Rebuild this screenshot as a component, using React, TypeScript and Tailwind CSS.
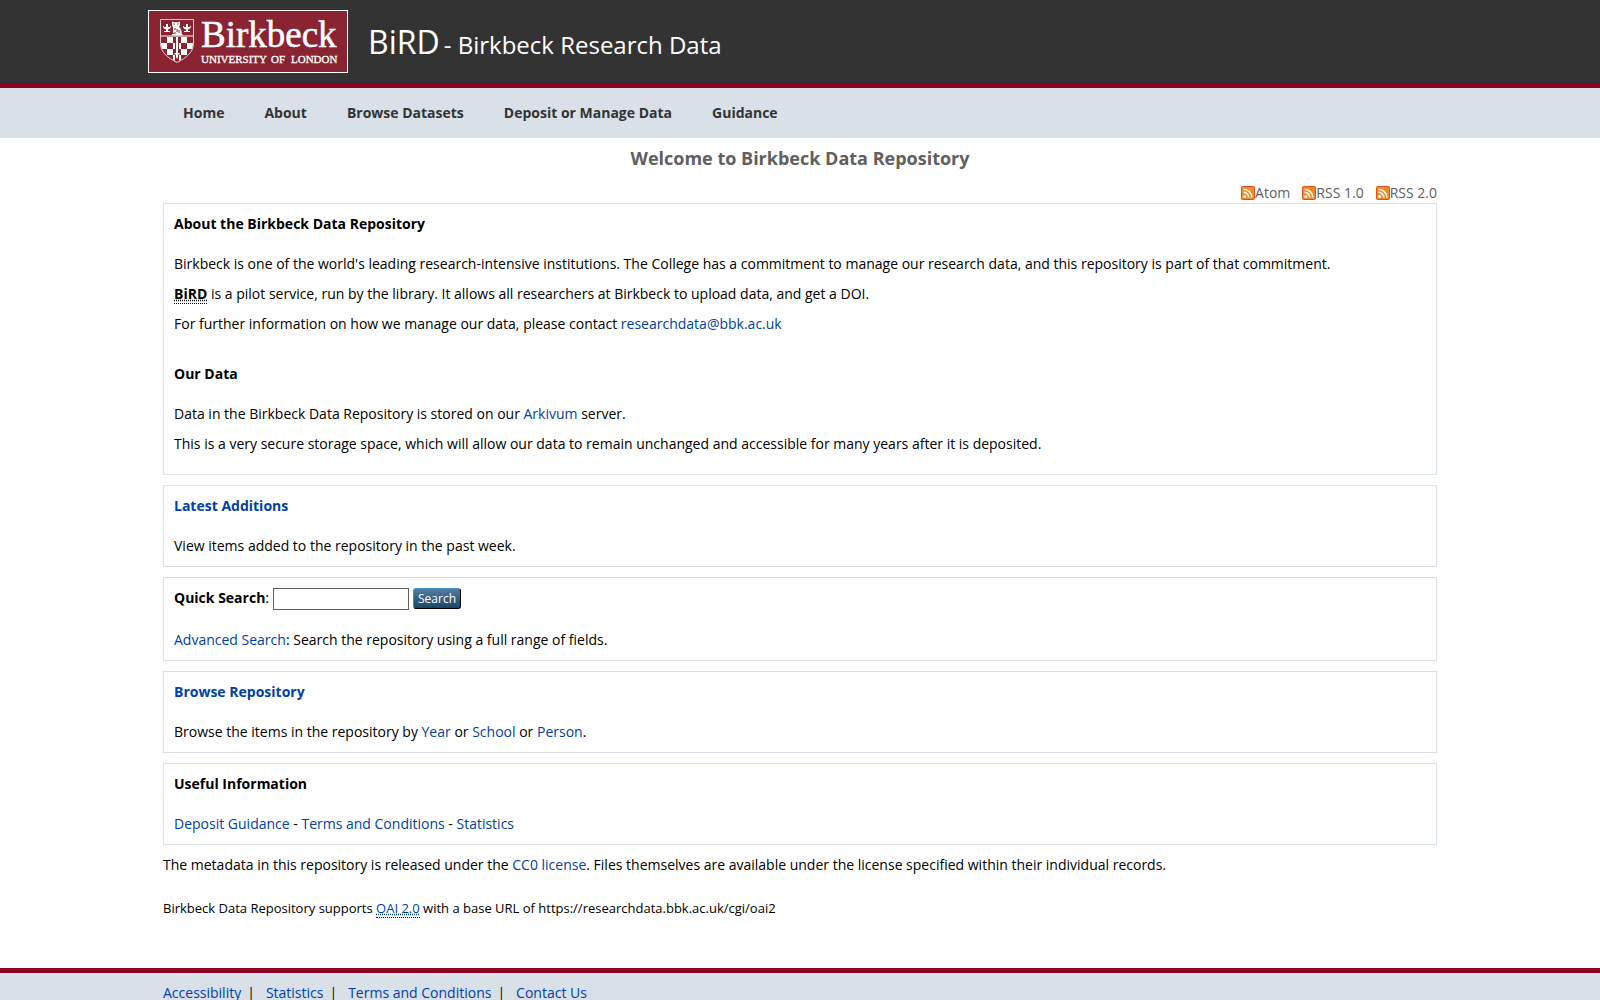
import type { ReactNode } from "react";

const wrap = "mx-auto w-full max-w-[1304px] px-[15px]";

function Link({ children }: { children: ReactNode }) {
  return (
    <a href="#" className="text-[#0040a8] hover:underline">
      {children}
    </a>
  );
}

function Crest() {
  return (
    <svg x="11" y="8" width="34" height="44" viewBox="0 0 34 44">
      <path d="M.5 .5h33v24c0 9-7.500 14.500-16.500 19C8 39 .5 33.500.5 24.500z" fill="#8a2432" stroke="#e6cdd1" />
      <clipPath id="shield">
        <path d="M1 17h32v7.500c0 8.500-7 14-16 18.300C8 38.500 1 33 1 24.500z" />
      </clipPath>
      <g clipPath="url(#shield)" fill="#fff">
        <path d="M7 18h6v6H7zM1 24h6v6H1zM13 24h2v6h-2zM7 30h6v6H7zM13 36h2v6h-2z" />
        <path d="M21 18h6v6h-6zM27 24h6v6h-6zM19 24h2v6h-2zM21 30h6v6h-6zM19 36h2v6h-2z" />
        <path d="M16 18h2v20l-1 2-1-2zM14.500 34h5v1.500h-5z" />
      </g>
      <path d="M1 17h32" stroke="#fff" />
      <g fill="#fff">
        <path d="M12 2.500l2 .700h4l2-.700V6l-1 2c2 1.500 3 4 2.500 7h1V16.500H12V15h2l-1-2V8l-1-2z" />
        <path d="M6 5h2v3h2V7h1c0 2-1 3-3 3.500V12h2v1H4v-1h2v-1.500C4 10 3 9 3 7h1v1h2z" />
        <path d="M26 5h2v3h2V7h1c0 2-1 3-3 3.500V12h2v1h-6v-1h2v-1.500c-2-.500-3-1.500-3-3.500h1v1h2z" />
      </g>
      <path d="M13.500 5h1.500M17 5h1.500M15 9v2M17 10v3M19 11v3M15 13v2" stroke="#8a2432" />
    </svg>
  );
}

function Logo() {
  return (
    <a
      href="#"
      aria-label="Birkbeck, University of London"
      className="block h-[63px] w-[200px] shrink-0 border border-white bg-[#8a2432]"
    >
      <svg viewBox="0 0 198 61" className="h-full w-full" aria-hidden="true">
        <Crest />
        <g fill="#fff" stroke="#fff" fontFamily="Liberation Serif, serif">
          <text x="52" y="36" strokeWidth="0.5" fontSize="37">
            Birkbeck
          </text>
          <g strokeWidth="0.3" fontSize="11">
            <text x="52" y="52">UNIVERSITY</text>
            <text x="122" y="52">OF</text>
            <text x="142" y="52">LONDON</text>
          </g>
        </g>
      </svg>
    </a>
  );
}

function FeedIcon() {
  return (
    <svg viewBox="0 0 14 14" className="size-3.5" aria-hidden="true">
      <rect width="14" height="14" rx="2" fill="#d9541a" />
      <rect x="1" y="1" width="12" height="12" rx="1" fill="#f58a2a" />
      <circle cx="3.700" cy="10.400" r="1.500" fill="#fff" />
      <path d="M2.500 6.300a5.300 5.300 0 0 1 5.300 5.300M2.500 3.200a8.400 8.400 0 0 1 8.400 8.400" fill="none" stroke="#fff" strokeWidth="1.500" />
    </svg>
  );
}

function Panel({ children }: { children: ReactNode }) {
  return <section className="mb-2.5 border border-[#d9e0e7] p-2.5">{children}</section>;
}

const nav = ["Home", "About", "Browse Datasets", "Deposit or Manage Data", "Guidance"];
const feeds = ["Atom", "RSS 1.0", "RSS 2.0"];
const footer = ["Accessibility", "Statistics", "Terms and Conditions", "Contact Us"];

export default function App() {
  return (
    <div className="min-h-screen bg-white font-['Open_Sans','Noto_Sans',sans-serif] text-sm/5 text-black">
      <header className="border-b-5 border-[#8c0026] bg-[#333333]">
        <div className="mx-auto flex w-full max-w-[1304px] items-start gap-5 py-2.5">
          <Logo />
          <h1 className="flex items-baseline gap-1 pt-2.5 text-2xl/11 font-normal text-white">
            <span className="text-[32px]">BiRD</span>
            <span>- Birkbeck Research Data</span>
          </h1>
        </div>
      </header>
      <nav className="bg-[#d9e0e7]">
        <ul className={`${wrap} flex`}>
          {nav.map((item) => (
            <li key={item}>
              <a href="#" className="block px-5 py-[15px] font-bold text-[#333333]">
                {item}
              </a>
            </li>
          ))}
        </ul>
      </nav>
      <main className={wrap}>
        <h2 className="py-2.5 text-center text-lg/5 font-bold text-[#606060]">Welcome to Birkbeck Data Repository</h2>
        <ul className="mt-[5px] flex justify-end gap-3 text-[#606060]">
          {feeds.map((feed) => (
            <li key={feed}>
              <a href="#" className="flex items-center">
                <FeedIcon />
                {feed}
              </a>
            </li>
          ))}
        </ul>
        <Panel>
          <h3 className="mb-5 font-bold">About the Birkbeck Data Repository</h3>
          <p className="mb-2.5">
            Birkbeck is one of the world's leading research-intensive institutions. The College has a commitment to manage our
            research data, and this repository is part of that commitment.
          </p>
          <p className="mb-2.5">
            <abbr title="Birkbeck Research Data" className="border-b border-dotted border-black font-bold underline decoration-dotted">
              BiRD
            </abbr>{" "}
            is a pilot service, run by the library. It allows all researchers at Birkbeck to upload data, and get a DOI.
          </p>
          <p>
            For further information on how we manage our data, please contact <Link>researchdata@bbk.ac.uk</Link>
          </p>
          <h3 className="mt-[30px] mb-5 font-bold">Our Data</h3>
          <p className="mb-2.5">
            Data in the Birkbeck Data Repository is stored on our <Link>Arkivum</Link> server.
          </p>
          <p className="mb-2.5">
            This is a very secure storage space, which will allow our data to remain unchanged and accessible for many years
            after it is deposited.
          </p>
        </Panel>
        <Panel>
          <h3 className="mb-5 font-bold">
            <Link>Latest Additions</Link>
          </h3>
          <p>View items added to the repository in the past week.</p>
        </Panel>
        <Panel>
          <form className="mb-5 flex gap-1" onSubmit={(e) => e.preventDefault()}>
            <label htmlFor="q">
              <strong>Quick Search</strong>:
            </label>
            <input id="q" type="text" className="h-[22px] w-[136px] border border-[#606060] bg-white px-1 text-xs" />
            <button
              type="submit"
              className="h-[21px] rounded-[3px] border border-t-[#4a8fc4] border-r-black border-b-black border-l-[#4a8fc4] bg-linear-to-b from-[#557c9c] to-[#174566] px-1 text-xs text-white"
            >
              Search
            </button>
          </form>
          <p>
            <Link>Advanced Search</Link>: Search the repository using a full range of fields.
          </p>
        </Panel>
        <Panel>
          <h3 className="mb-5 font-bold">
            <Link>Browse Repository</Link>
          </h3>
          <p>
            Browse the items in the repository by <Link>Year</Link> or <Link>School</Link> or <Link>Person</Link>.
          </p>
        </Panel>
        <Panel>
          <h3 className="mb-5 font-bold">Useful Information</h3>
          <p>
            <Link>Deposit Guidance</Link> - <Link>Terms and Conditions</Link> - <Link>Statistics</Link>
          </p>
        </Panel>
        <p>
          The metadata in this repository is released under the <Link>CC0 license</Link>. Files themselves are available under
          the license specified within their individual records.
        </p>
        <p className="mt-[23px] mb-[50px] text-[13px]/5">
          Birkbeck Data Repository supports{" "}
          <Link>
            <abbr
              title="Open Archives Protocol for Metadata Harvesting v2.0"
              className="border-b border-dotted border-black underline decoration-dotted"
            >
              OAI 2.0
            </abbr>
          </Link>{" "}
          with a base URL of https://researchdata.bbk.ac.uk/cgi/oai2
        </p>
      </main>
      <footer className="border-t-5 border-[#8c0026] bg-[#d9e0e7]">
        <ul className={`${wrap} flex gap-[11px] pt-2.5`}>
          {footer.map((item, i) => (
            <li key={item} className="flex gap-1.5">
              <Link>{item}</Link>
              {i < footer.length - 1 && <span>|</span>}
            </li>
          ))}
        </ul>
      </footer>
    </div>
  );
}
